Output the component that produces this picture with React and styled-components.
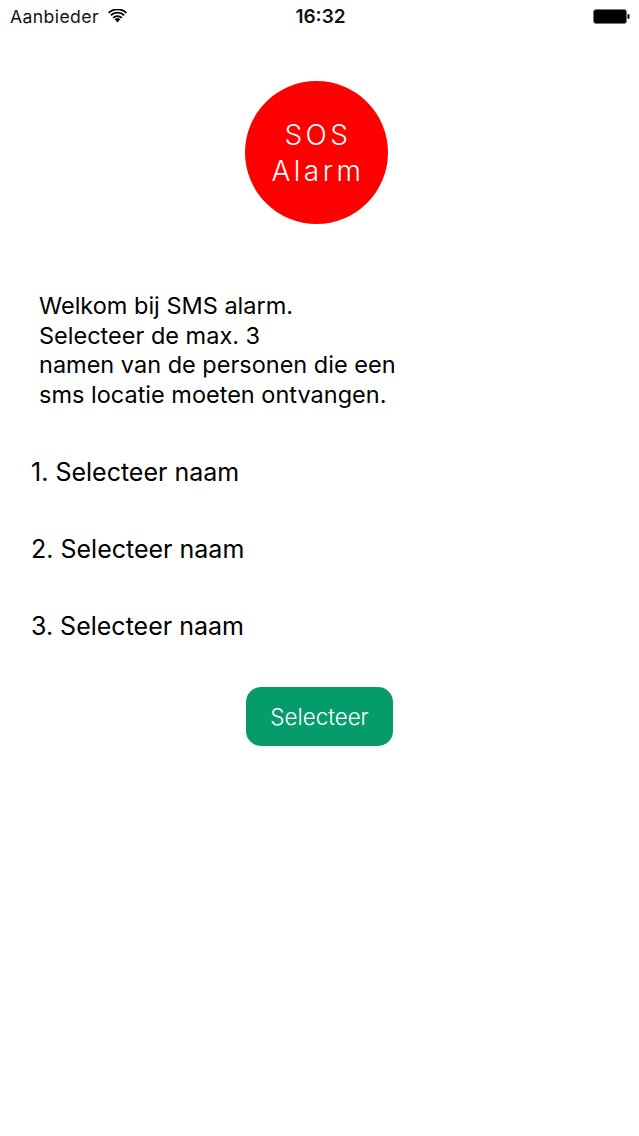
import React from "react";
import styled, { createGlobalStyle } from "styled-components";

const Global = createGlobalStyle`
  html, body { margin: 0; padding: 0; background: #fff; }
  body { font-family: "Inter", "Liberation Sans", sans-serif; color: #000; }
`;
const Page = styled.div`
  width: 639px; height: 1136px; display: flex; flex-direction: column; overflow: hidden; background: #fff;
`;
const StatusBar = styled.div`
  height: 32px; display: grid; grid-template-columns: 1fr auto 1fr; align-items: center; padding: 0 9px 0 10px;
`;
const Carrier = styled.div`display: flex; align-items: center; gap: 9px; font-size: 17.6px; letter-spacing: .4px; color: #111;`;
const Time = styled.div`font-weight: 600; font-size: 19px; margin-left: 1px; color: #111;`;
const Battery = styled.div`justify-self: end; display: flex; align-items: center;`;
const Badge = styled.div`
  align-self: flex-start; margin: 49px 0 0 245px; padding-left: 3px; box-sizing: border-box; width: 143px; height: 143px; border-radius: 50%; background: #ff0000; color: #fff;
  display: flex; align-items: center; justify-content: center; text-align: center; font-size: 28px; font-weight: 300; line-height: 36px; letter-spacing: 3.5px;
`;
const Intro = styled.p`
  margin: 67px 0 0 39px; font-size: 23.5px; line-height: 29.5px;
`;
const List = styled.div`margin: 48px 0 0 31px; display: flex; flex-direction: column; gap: 46px;`;
const Item = styled.div`font-size: 25px; line-height: 31px;`;
const Btn = styled.button`
  align-self: flex-start; margin: 45px 0 0 246px; width: 147px; height: 59px; border: 0; border-radius: 15px; background: #069b6b; color: #fff;
  font: 300 22.4px "Inter", "Liberation Sans", sans-serif;
`;
export default function App() {
  return (
    <Page>
      <Global />
      <StatusBar>
        <Carrier>Aanbieder
          <svg width="19" height="14" viewBox="0 0 19 14"><path d="M9.5 13.5 6.7 10.3a4 4 0 0 1 5.6 0Z" /><path d="M4.5 8.2a7.2 7.2 0 0 1 10 0l-1.3 1.4a5.2 5.2 0 0 0-7.4 0Z" /><path d="M2.2 5.6a10.6 10.6 0 0 1 14.6 0l-1.3 1.4a8.7 8.7 0 0 0-12 0Z" /><path d="M0 3.2a13.8 13.8 0 0 1 19 0l-1.3 1.4a12 12 0 0 0-16.4 0Z" /></svg>
        </Carrier>
        <Time>16:32</Time>
        <Battery>
          <svg width="37" height="15" viewBox="0 0 37 15"><rect x="0.5" y="0.5" width="33" height="14" rx="2.5" fill="#000" stroke="#777" /><rect x="34.5" y="5" width="2" height="5" rx="1" /></svg>
        </Battery>
      </StatusBar>
      <Badge>SOS<br />Alarm</Badge>
      <Intro>Welkom bij SMS alarm.<br />Selecteer de max. 3<br />namen van de personen die een<br />sms locatie moeten ontvangen.</Intro>
      <List>
        <Item>1. Selecteer naam</Item>
        <Item>2. Selecteer naam</Item>
        <Item>3. Selecteer naam</Item>
      </List>
      <Btn>Selecteer</Btn>
    </Page>
  );
}
